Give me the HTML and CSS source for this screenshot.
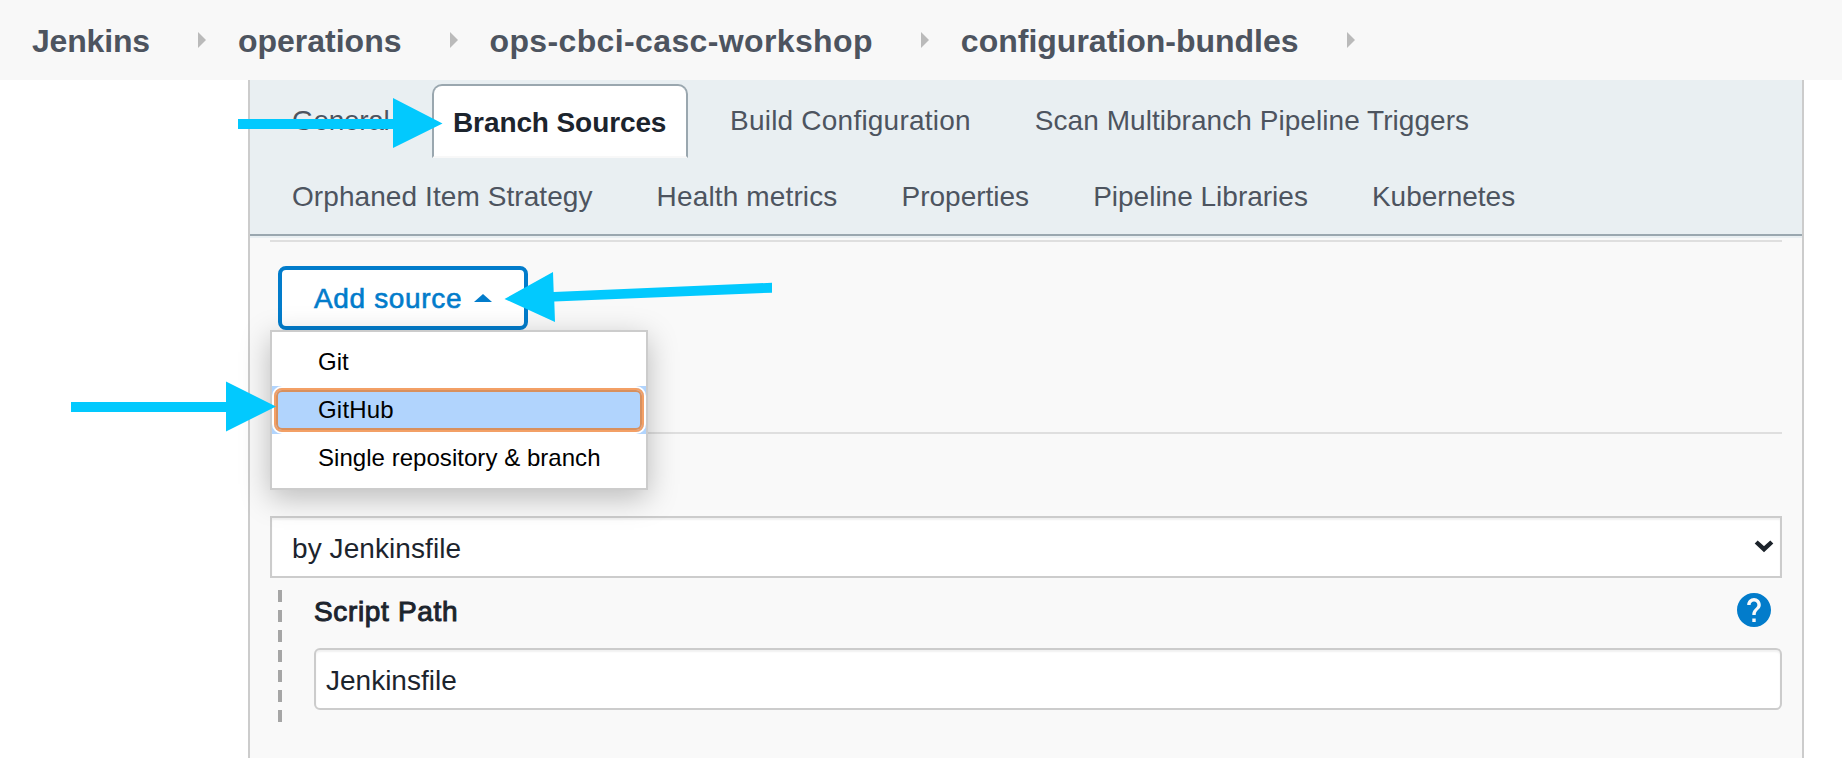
FILE: index.html
```
<!DOCTYPE html>
<html lang="en">
<head>
<meta charset="utf-8">
<title>configuration-bundles Config [Jenkins]</title>
<link rel="stylesheet" href="styles.css">
</head>
<body>
<nav class="crumbs">
  <a class="crumb c1">Jenkins</a><i class="sep"></i>
  <a class="crumb c2">operations</a><i class="sep"></i>
  <a class="crumb c3">ops-cbci-casc-workshop</a><i class="sep"></i>
  <a class="crumb c4">configuration-bundles</a><i class="sep"></i>
</nav>
<main class="panel">
  <div class="tabs">
    <div class="tab-row">
      <a class="tab general">General</a>
      <a class="tab active">Branch Sources</a>
      <a class="tab build">Build Configuration</a>
      <a class="tab scan">Scan Multibranch Pipeline Triggers</a>
    </div>
    <div class="tab-row">
      <a class="tab orphan">Orphaned Item Strategy</a>
      <a class="tab health">Health metrics</a>
      <a class="tab props">Properties</a>
      <a class="tab libs">Pipeline Libraries</a>
      <a class="tab kube">Kubernetes</a>
    </div>
  </div>
  <section class="content">
    <div class="sources">
      <div class="dropdown">
        <button class="add-source"><span>Add source</span><i class="caret"></i></button>
        <ul class="menu">
          <li>Git</li>
          <li class="selected"><span class="ring">GitHub</span></li>
          <li class="single">Single repository &amp; branch</li>
        </ul>
      </div>
    </div>
    <div class="select">
      <span>by Jenkinsfile</span>
      <svg class="chevron" width="20" height="14" viewBox="0 0 20 14"><path d="M2.2 3 10 10.2 17.8 3" fill="none" stroke="#1c232b" stroke-width="4.4"/></svg>
    </div>
    <div class="nested">
      <div class="dashes"></div>
      <div class="field">
        <div class="field-head">
          <label>Script Path</label>
          <svg class="help" width="34" height="34" viewBox="2 2 20 20"><path fill="#027ccb" d="M12 2C6.48 2 2 6.48 2 12s4.480 10 10 10 10-4.480 10-10S17.520 2 12 2zm1 17h-2v-2h2v2zm2.070-7.750l-.9.920C13.450 12.900 13 13.500 13 15h-2v-.5c0-1.100.450-2.100 1.170-2.830l1.240-1.260c.370-.360.590-.860.590-1.410 0-1.100-.9-2-2-2s-2 .9-2 2H8c0-2.210 1.790-4 4-4s4 1.790 4 4c0 .880-.360 1.680-.930 2.250z"/></svg>
        </div>
        <div class="input">Jenkinsfile</div>
      </div>
    </div>
  </section>
</main>
<svg class="arrows" width="1842" height="758" viewBox="0 0 1842 758" fill="#02c9fe">
  <path d="M238 119H393V98L442.500 123.500 393 148V129H238z"/>
  <path d="M504.500 299 553 272 553.700 292 772 282.700V292.700L554.300 301.500 555 322z"/>
  <path d="M71 402H226V381.500L276 406.500 226 431.500V412H71z"/>
</svg>
</body>
</html>
```
FILE: styles.css
```
* { box-sizing: border-box; }
body {
  margin: 0;
  height: 758px;
  overflow: hidden;
  display: flex;
  flex-direction: column;
  background: #fff;
  color: #1c242d;
  font: 28px/36px "Liberation Sans", Arial, sans-serif;
}
.crumbs {
  flex: none;
  height: 80px;
  padding-left: 32px;
  display: flex;
  align-items: center;
  background: #f8f8f8;
  color: #4d545f;
  font-size: 32px;
  font-weight: bold;
  white-space: nowrap;
}
.crumb { line-height: 36px; padding-top: 2px; }
.c1 { letter-spacing: -.18px; }
.c3 { letter-spacing: .37px; }
.sep {
  margin: 0 32px 0 48px;
  border-left: 8px solid #bababa;
  border-top: 8px solid transparent;
  border-bottom: 8px solid transparent;
}
.panel {
  flex: 1;
  width: 1556px;
  margin-left: 248px;
  border: solid #ccc;
  border-width: 0 2px;
  background: #f9f9f9;
}
.tabs {
  height: 158px;
  padding: 4px 10px 0;
  background: linear-gradient(#9aa7af, #9aa7af) 0 154px / 100% 2px no-repeat, #e9eff2;
}
.tab-row { height: 76px; display: flex; align-items: flex-start; }
.tab {
  padding: 19px 32px;
  color: #4d545f;
  white-space: nowrap;
}
.general { width: 172px; letter-spacing: -.3px; }
.build { letter-spacing: .22px; }
.scan { letter-spacing: .05px; }
.orphan { letter-spacing: .08px; }
.health { letter-spacing: .14px; }
.active {
  width: 256px;
  height: 74px;
  margin-right: 10px;
  padding: 19px 0 0 19px;
  border: 2px solid #9aa7af;
  border-bottom-color: #f8f8f8;
  border-radius: 10px 10px 0 0;
  background: #fff;
  color: #1c242d;
  font-weight: bold;
  letter-spacing: -.1px;
}
.content { padding: 2px 20px 0; }
.sources {
  height: 194px;
  border: solid #dfdfdf;
  border-width: 2px 0;
  padding: 24px 8px;
}
.dropdown { position: relative; width: 250px; }
.add-source {
  width: 250px;
  height: 64px;
  padding: 2px 0 0 32px;
  display: flex;
  align-items: center;
  gap: 12px;
  border: 4px solid #027ccb;
  border-radius: 8px;
  background: #fff;
  color: #027ccb;
  font: 28px/36px "Liberation Sans", Arial, sans-serif;
  letter-spacing: .65px;
  -webkit-text-stroke: .6px #027ccb;
}
.caret {
  margin-bottom: 2px;
  border: solid transparent;
  border-width: 0 9px 8px;
  border-bottom-color: #027ccb;
}
.menu {
  position: absolute;
  left: -8px;
  top: 64px;
  z-index: 1;
  width: 378px;
  height: 160px;
  margin: 0;
  padding: 6px 0;
  list-style: none;
  border: 2px solid #ccc;
  background: #fff;
  box-shadow: 0 8px 28px rgba(0, 0, 0, .25);
  color: #000;
  font-size: 24px;
}
.menu li { height: 48px; padding-left: 46px; line-height: 47px; }
.menu .selected { padding: 2px; background: #b1d4fd; }
.menu .single { letter-spacing: .04px; }
.ring {
  display: block;
  height: 44px;
  padding-left: 42px;
  line-height: 39px;
  letter-spacing: .2px;
  border: 2px solid #f3a066;
  border-radius: 8px;
  box-shadow: 0 0 0 2px #fff, inset 0 0 0 2px #d8905e;
}
.select {
  height: 62px;
  margin-top: 82px;
  padding: 3px 6px 0 20px;
  letter-spacing: .08px;
  display: flex;
  align-items: center;
  justify-content: space-between;
  border: 2px solid #ccc;
  background: #fff;
  box-shadow: inset 0 2px 2px rgba(0, 0, 0, .06);
}
.chevron { margin-bottom: 5px; }
.nested { display: flex; padding: 12px 0 0 8px; }
.dashes {
  width: 4px;
  height: 132px;
  background: repeating-linear-gradient(#a6a6a6 0 12px, transparent 12px 20px);
}
.field { flex: 1; margin-left: 32px; }
.field-head {
  height: 58px;
  padding: 3px 11px 0 0;
  display: flex;
  justify-content: space-between;
  align-items: flex-start;
}
.field-head label {
  padding-top: 1px;
  letter-spacing: .65px;
  -webkit-text-stroke: 1px #1c242d;
}
.input {
  height: 62px;
  padding: 13px 10px 0;
  border: 2px solid #ccc;
  border-radius: 6px;
  background: #fff;
  box-shadow: inset 0 2px 2px rgba(0, 0, 0, .06);
}
.arrows { position: absolute; left: 0; top: 0; z-index: 2; }
```
